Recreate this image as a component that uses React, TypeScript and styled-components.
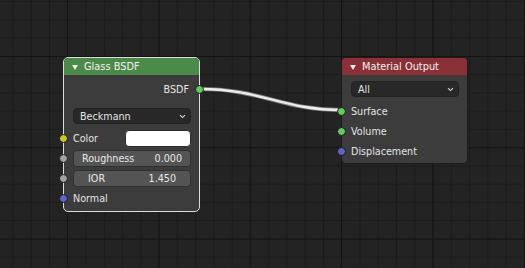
import React from "react";
import styled, { createGlobalStyle } from "styled-components";

const GlobalStyle = createGlobalStyle`
  html, body {
    margin: 0;
    padding: 0;
    background: #232323;
  }
  body {
    font-family: "DejaVu Sans", "Liberation Sans", sans-serif;
  }
`;

const Canvas = styled.div`
  position: relative;
  width: 525px;
  height: 268px;
  overflow: hidden;
  background-color: #232323;
  background-image:
    linear-gradient(to right, #141414 1px, transparent 1px),
    linear-gradient(to bottom, #141414 1px, transparent 1px),
    linear-gradient(to right, #1b1b1b 1px, transparent 1px),
    linear-gradient(to bottom, #1b1b1b 1px, transparent 1px);
  background-size:
    91.35px 91.35px,
    91.35px 91.35px,
    18.27px 18.27px,
    18.27px 18.27px;
  background-position:
    67px 56px,
    67px 56px,
    12.5px 1px,
    12.5px 1px;
`;

const Links = styled.svg`
  position: absolute;
  left: 0;
  top: 0;
`;

const Node = styled.div<{ $x: number; $y: number; $w: number; $selected?: boolean }>`
  position: absolute;
  left: ${(p) => p.$x}px;
  top: ${(p) => p.$y}px;
  width: ${(p) => p.$w}px;
  box-sizing: border-box;
  border: 1px solid ${(p) => (p.$selected ? "#dcdcdc" : "#1c1c1c")};
  border-radius: 5px;
  background: #3c3c3c;
  display: flex;
  flex-direction: column;
  font-size: 9.6px;
  color: #e4e4e4;
`;

const Header = styled.div<{ $color: string }>`
  height: 17px;
  background: ${(p) => p.$color};
  border-radius: 4px 4px 0 0;
  display: flex;
  align-items: center;
  gap: 6px;
  padding-left: 8px;
  font-size: 9.8px;
  color: #f0f0f0;
`;

const Arrow = styled.span`
  width: 0;
  height: 0;
  border-left: 3px solid transparent;
  border-right: 3px solid transparent;
  border-top: 5px solid #e8e8e8;
  margin-top: 1px;
`;

const Body = styled.div<{ $top: number; $bottom: number }>`
  display: flex;
  flex-direction: column;
  padding: ${(p) => p.$top}px 0 ${(p) => p.$bottom}px;
`;

const Row = styled.div<{ $align?: "left" | "right"; $mt?: number }>`
  position: relative;
  height: 20px;
  display: flex;
  align-items: center;
  justify-content: ${(p) => (p.$align === "right" ? "flex-end" : "flex-start")};
  padding: 0 10px 0 9px;
  margin-top: ${(p) => p.$mt ?? 0}px;
`;

const Label = styled.span`
  flex: 1;
  white-space: nowrap;
`;

const Socket = styled.span<{ $color: string; $side: "left" | "right" }>`
  position: absolute;
  ${(p) => p.$side}: -5px;
  top: 5.5px;
  width: 9px;
  height: 9px;
  box-sizing: border-box;
  border-radius: 50%;
  background: ${(p) => p.$color};
  border: 1px solid #1a1a1a;
`;

const Dropdown = styled.div`
  flex: 1;
  height: 16px;
  margin-right: -2px;
  box-sizing: border-box;
  background: #282828;
  border: 1px solid #222;
  border-radius: 4px;
  display: flex;
  align-items: center;
  justify-content: space-between;
  padding: 0 4px 0 6px;
`;

const Swatch = styled.div`
  width: 66px;
  height: 17px;
  margin-right: -2px;
  box-sizing: border-box;
  background: #ffffff;
  border-radius: 4px;
  border: 1px solid #2a2a2a;
`;

const Slider = styled.div<{ $inset: number }>`
  flex: 1;
  height: 17px;
  margin-right: -2px;
  box-sizing: border-box;
  background: #545454;
  border: 1px solid #303030;
  border-radius: 4px;
  display: flex;
  align-items: center;
  justify-content: space-between;
  padding: 0 ${(p) => p.$inset}px;
  color: #e8e8e8;
`;

function Chevron() {
  return (
    <svg width="7" height="5" viewBox="0 0 7 5">
      <polyline points="1,1.2 3.5,3.6 6,1.2" fill="none" stroke="#d8d8d8" strokeWidth="1.1" />
    </svg>
  );
}

const LINK = "M200 89 C 262 89, 282 110, 341 110";

export default function App() {
  return (
    <>
      <GlobalStyle />
      <Canvas>
        <Links width="525" height="268">
          <path d={LINK} fill="none" stroke="#7a7a7a" strokeWidth="4.2" strokeLinecap="round" />
          <path d={LINK} fill="none" stroke="#ececec" strokeWidth="2.4" strokeLinecap="round" />
        </Links>

        <Node $x={63} $y={57} $w={137} $selected>
          <Header $color="#4b8a48">
            <Arrow />
            Glass BSDF
          </Header>
          <Body $top={4} $bottom={3}>
            <Row $align="right">
              <span>BSDF</span>
              <Socket $color="#63c763" $side="right" />
            </Row>
            <Row $mt={7}>
              <Dropdown>
                <span>Beckmann</span>
                <Chevron />
              </Dropdown>
            </Row>
            <Row $mt={2}>
              <Socket $color="#c7c729" $side="left" />
              <Label>Color</Label>
              <Swatch />
            </Row>
            <Row>
              <Socket $color="#a1a1a1" $side="left" />
              <Slider $inset={8}>
                <span>Roughness</span>
                <span>0.000</span>
              </Slider>
            </Row>
            <Row>
              <Socket $color="#a1a1a1" $side="left" />
              <Slider $inset={14}>
                <span>IOR</span>
                <span>1.450</span>
              </Slider>
            </Row>
            <Row>
              <Socket $color="#6363c7" $side="left" />
              <Label>Normal</Label>
            </Row>
          </Body>
        </Node>

        <Node $x={341} $y={57} $w={127}>
          <Header $color="#8a3036">
            <Arrow />
            Material Output
          </Header>
          <Body $top={4} $bottom={2}>
            <Row>
              <Dropdown>
                <span>All</span>
                <Chevron />
              </Dropdown>
            </Row>
            <Row $mt={2}>
              <Socket $color="#63c763" $side="left" />
              <Label>Surface</Label>
            </Row>
            <Row>
              <Socket $color="#63c763" $side="left" />
              <Label>Volume</Label>
            </Row>
            <Row>
              <Socket $color="#6363c7" $side="left" />
              <Label>Displacement</Label>
            </Row>
          </Body>
        </Node>
      </Canvas>
    </>
  );
}
